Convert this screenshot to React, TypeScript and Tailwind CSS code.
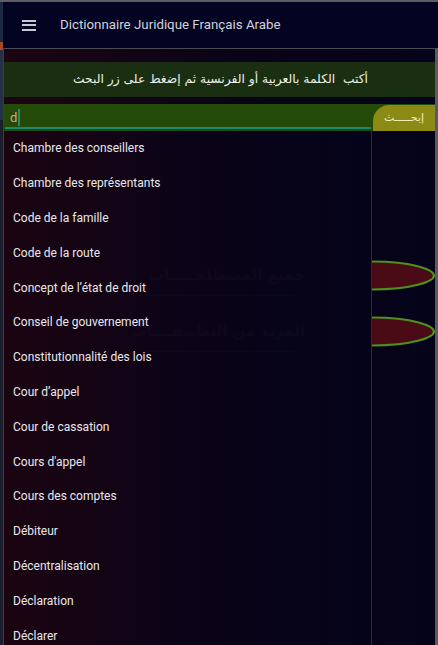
import React from "react";

const items = [
  "Chambre des conseillers",
  "Chambre des représentants",
  "Code de la famille",
  "Code de la route",
  "Concept de l’état de droit",
  "Conseil de gouvernement",
  "Constitutionnalité des lois",
  "Cour d’appel",
  "Cour de cassation",
  "Cours d'appel",
  "Cours des comptes",
  "Débiteur",
  "Décentralisation",
  "Déclaration",
  "Déclarer",
];

function HalfEllipse() {
  return (
    <svg width="63" height="31" viewBox="0 0 63 31" className="block">
      <path d="M0 1.5 C 42 1.5, 62 10, 62 15.5 C 62 21, 42 29.5, 0 29.5 Z" fill="#4a0b16" />
      <path d="M0 1.5 C 42 1.5, 62 10, 62 15.5 C 62 21, 42 29.5, 0 29.5" fill="none" stroke="#4f8f1c" strokeWidth="2.2" />
    </svg>
  );
}

export default function App() {
  const arabic = { fontFamily: '"DejaVu Sans", sans-serif' };
  return (
    <div
      className="w-[438px] h-[645px] overflow-hidden flex flex-col bg-[#05031a]"
      style={{ fontFamily: 'Roboto, "Liberation Sans", sans-serif' }}
    >
      <div className="h-[2px] bg-[#5d5d63] shrink-0" />
      <div className="flex flex-1 min-h-0">
        <div className="w-[3px] flex flex-col shrink-0">
          <div className="h-[40px] bg-[#1b2a44]" />
          <div className="h-[8px] bg-[#b0471b]" />
          <div className="h-[70px] bg-[#22304a]" />
          <div className="flex-1 bg-[#1a1f2e]" />
        </div>
        <div className="flex-1 flex flex-col min-w-0">
          <header className="h-[46px] shrink-0 bg-[#030322] flex items-center">
            <div className="ml-[19px] w-[14px] flex flex-col gap-[2.5px]">
              <div className="h-[2px] bg-[#c9c9d6]" />
              <div className="h-[2px] bg-[#c9c9d6]" />
              <div className="h-[2px] bg-[#c9c9d6]" />
            </div>
            <span className="ml-[24px] text-[13.3px] text-[#d3d3dc]">
              Dictionnaire Juridique Français Arabe
            </span>
          </header>
          <main className="flex-1 min-h-0 relative border-t border-l border-r-[3px] border-t-[#4a4a55] border-l-[#3b3b48] border-r-[#5a5a60] bg-gradient-to-r from-[#1c0411] via-[#0b0318] to-[#05031a] overflow-hidden">
            <div
              dir="rtl"
              className="mt-[13px] h-[35px] bg-[#1a2f11] flex items-center justify-center pl-[2px] text-[12.3px] text-[#eef0ea]"
              style={arabic}
            >
              أكتب&nbsp; الكلمة بالعربية أو الفرنسية ثم إضغط على زر البحث
            </div>
            <div className="mt-[7px] relative flex h-[27px]">
              <div className="w-[368px] bg-[#244a0a] relative">
                <div className="absolute left-[6px] top-[5px] flex items-center">
                  <span className="text-[13px] text-[#e3a07a] leading-[16px]">d</span>
                  <span className="w-[1.5px] h-[17px] bg-[#1a8f78] ml-[1px]" />
                </div>
                <div className="absolute left-[1px] right-[1px] bottom-[2px] h-[2px] bg-[#1a8a6c]" />
              </div>
              <div className="flex-1 bg-[#244a0a] pt-[1px]">
                <div
                  className="h-full ml-[1px] rounded-tl-[16px] bg-[#8a8a14] flex items-center justify-center text-[11px] text-[#f2ecb8]"
                  style={arabic}
                >
                  إبحـــــث
                </div>
              </div>
              <div className="absolute left-0 top-full w-[368px] h-[520px] border-r border-[#2a2a36] bg-gradient-to-r from-[#1c0411]/95 via-[#0b0318]/95 to-[#05031a]/95 z-10">
                {items.map((t) => (
                  <div key={t} className="h-[34.8px] flex items-center pl-[9px] text-[12px] text-[#e8e8ec]">
                    {t}
                  </div>
                ))}
              </div>
            </div>
            <div className="flex flex-col mt-[129px]">
              <div className="flex items-center h-[31px]">
                <div className="w-[368px] flex justify-end pr-[67px]">
                  <span dir="rtl" className="text-[15px] font-bold text-[#5a5a6a]" style={arabic}>
                    جميع المصطلحـــــات
                  </span>
                </div>
                <HalfEllipse />
              </div>
              <div className="w-[150px] ml-[140px] mt-[4px] h-px bg-[#4a4a5a]" />
              <div className="flex items-center h-[31px] mt-[20px]">
                <div className="w-[368px] flex justify-end pr-[67px]">
                  <span dir="rtl" className="text-[15px] font-bold text-[#5a5a6a]" style={arabic}>
                    المزيد من التطبيقــــات
                  </span>
                </div>
                <HalfEllipse />
              </div>
              <div className="w-[150px] ml-[140px] mt-[4px] h-px bg-[#4a4a5a]" />
            </div>
          </main>
        </div>
      </div>
    </div>
  );
}
